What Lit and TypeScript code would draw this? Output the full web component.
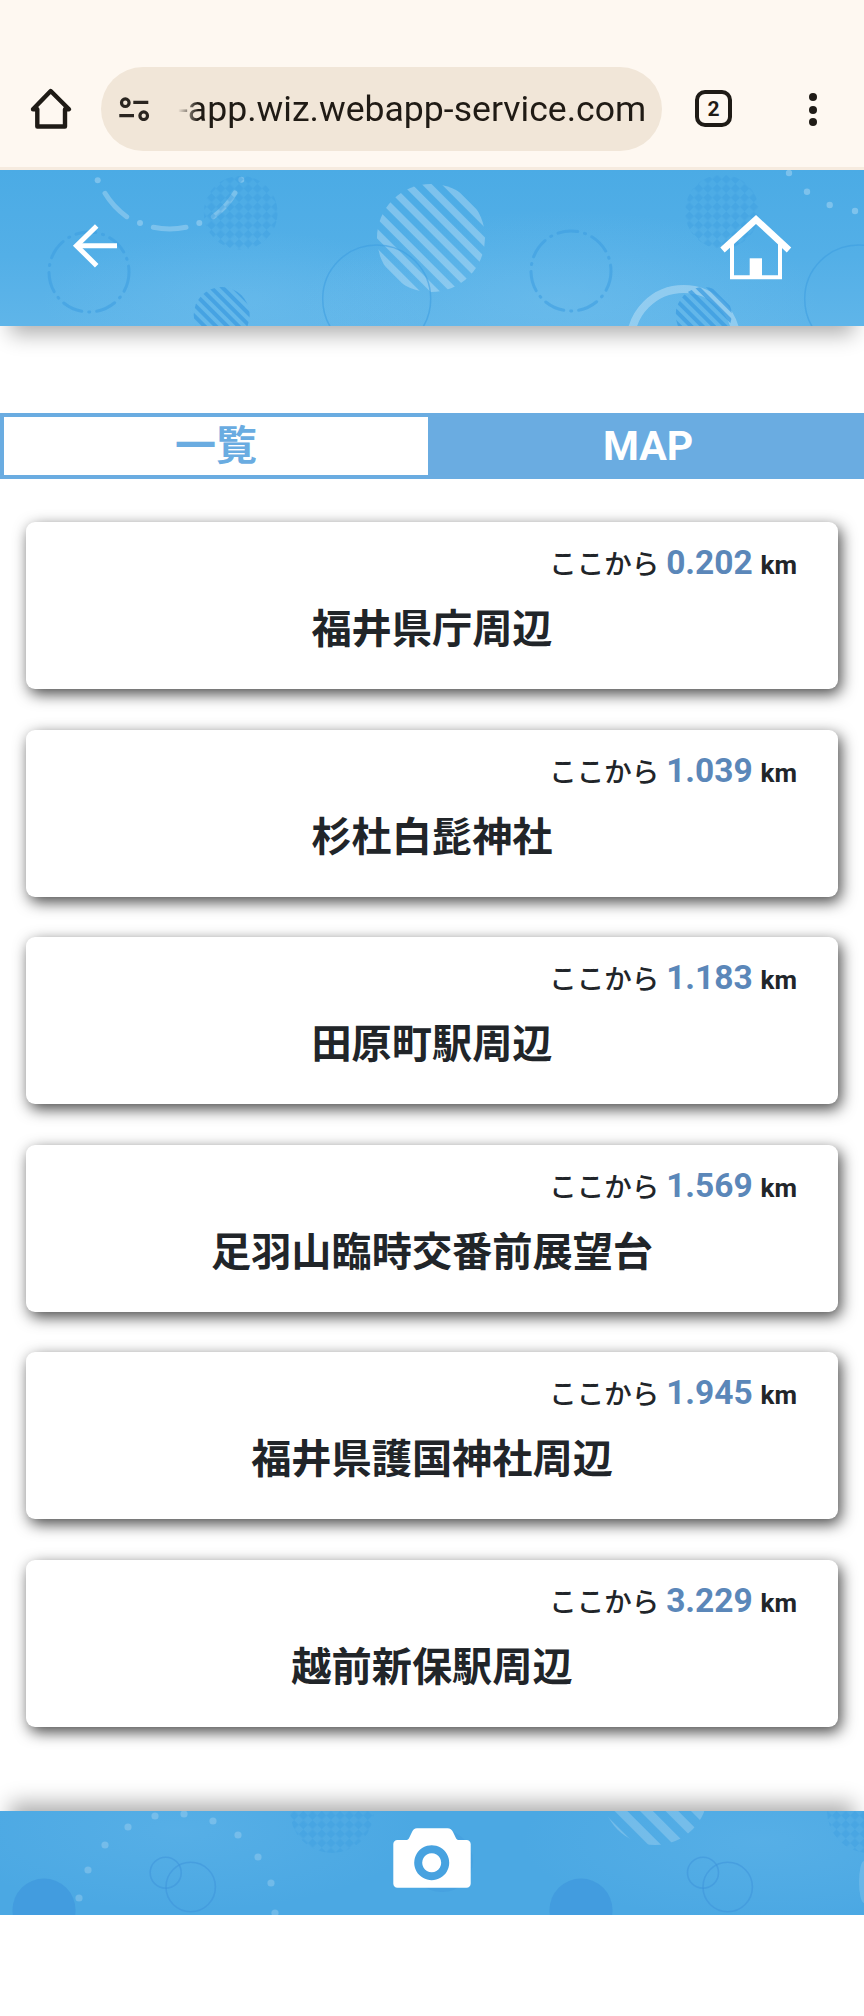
import { LitElement, html, css, svg } from 'lit';
import { customElement } from 'lit/decorators.js';

const SPOTS = [
  { name: '福井県庁周辺', km: '0.202' },
  { name: '杉杜白髭神社', km: '1.039' },
  { name: '田原町駅周辺', km: '1.183' },
  { name: '足羽山臨時交番前展望台', km: '1.569' },
  { name: '福井県護国神社周辺', km: '1.945' },
  { name: '越前新保駅周辺', km: '3.229' },
];

const DOTS_TOP = [[789, 173], [807, 191.7], [829.7, 205], [855, 211]];
const DOTS_BOTTOM = [[79, 1898], [88, 1870], [105, 1845], [128, 1827], [155, 1816], [184, 1814], [213, 1821], [238, 1835], [258, 1857], [271, 1883], [275, 1913]];

const patterns = (prefix: string) => svg`
  <defs>
    <pattern id="${prefix}-light" width="14" height="14" patternUnits="userSpaceOnUse" patternTransform="rotate(-45)">
      <rect width="7" height="14" fill="#fff" fill-opacity=".27"></rect>
    </pattern>
    <pattern id="${prefix}-wide" width="18" height="18" patternUnits="userSpaceOnUse" patternTransform="rotate(-45)">
      <rect width="9" height="18" fill="#fff" fill-opacity=".2"></rect>
    </pattern>
    <pattern id="${prefix}-dark" width="8" height="8" patternUnits="userSpaceOnUse" patternTransform="rotate(-45)">
      <rect width="4" height="8" fill="#3c9ce0" fill-opacity=".75"></rect>
    </pattern>
    <pattern id="${prefix}-check" width="13" height="13" patternUnits="userSpaceOnUse" patternTransform="rotate(45)">
      <rect width="6.5" height="6.5" fill="#3c9ce0" fill-opacity=".42"></rect>
      <rect x="6.5" y="6.5" width="6.5" height="6.5" fill="#3c9ce0" fill-opacity=".42"></rect>
    </pattern>
  </defs>`;

@customElement('app-root')
export class AppRoot extends LitElement {
  static styles = css`
    :host {
      display: block;
      width: 864px;
      min-height: 2016px;
      background: #fff;
      font-family: Roboto, "Noto Sans CJK JP", sans-serif;
      color: #212529;
    }

    .chrome {
      box-sizing: border-box;
      height: 170px;
      padding: 67px 0 0 28px;
      display: flex;
      align-items: flex-start;
      background: #fef8f1;
      border-bottom: 3px solid #f6ebdf;
    }
    .chrome-home {
      width: 46px;
      height: 44px;
      margin-top: 20px;
      margin-right: 27px;
    }
    .pill {
      box-sizing: border-box;
      width: 561px;
      height: 84px;
      padding-left: 16px;
      display: flex;
      align-items: center;
      gap: 27px;
      border-radius: 42px;
      background: #f1e6d8;
    }
    .pill svg {
      width: 34px;
      height: 24px;
      flex: none;
    }
    .url {
      font-size: 35.6px;
      line-height: 84px;
      color: #201b15;
      white-space: nowrap;
      -webkit-mask-image: linear-gradient(to right, transparent, #000 20px);
      mask-image: linear-gradient(to right, transparent, #000 20px);
    }
    .tab-count {
      box-sizing: border-box;
      width: 37px;
      height: 37px;
      margin: 23px 0 0 33px;
      display: flex;
      align-items: center;
      justify-content: center;
      border: 4px solid #1f1b16;
      border-radius: 10px;
      font-size: 21px;
      font-weight: 700;
      color: #1f1b16;
    }
    .menu {
      margin: 26px 0 0 77px;
      display: flex;
      flex-direction: column;
      gap: 4.6px;
    }
    .menu i {
      display: block;
      width: 8px;
      height: 8px;
      border-radius: 50%;
      background: #1f1b16;
    }

    .head {
      position: relative;
      box-sizing: border-box;
      height: 156px;
      padding: 0 68px 0 70px;
      display: flex;
      align-items: center;
      justify-content: space-between;
      background:
        radial-gradient(ellipse 260px 90px at 560px 130px, rgba(130, 200, 240, .3), transparent),
        radial-gradient(ellipse 200px 70px at 240px 130px, rgba(130, 200, 240, .25), transparent),
        linear-gradient(#4babe5, #53afe7 55%, #5fb5e9);
      box-shadow: 0 18px 20px -10px rgba(0, 0, 0, .32);
    }
    .decor {
      position: absolute;
      inset: 0;
      width: 100%;
      height: 100%;
    }
    .head-back, .head-home {
      position: relative;
    }
    .head-back {
      width: 52px;
      height: 48px;
      margin-top: -4px;
    }
    .head-home {
      width: 80px;
      height: 74px;
      margin-top: -2px;
    }

    .tabs {
      margin-top: 87px;
      display: grid;
      grid-template-columns: 1fr 1fr;
      height: 66px;
      font-size: 41px;
      font-weight: 700;
      line-height: 58px;
      text-align: center;
    }
    .tab {
      box-sizing: border-box;
      border: 4px solid #6aace1;
    }
    .tab.on {
      background: #fff;
      color: #6aace1;
    }
    .tab.off {
      background: #6aace1;
      color: #fff;
    }

    .list {
      margin-top: 43px;
      padding: 0 26px 0 26px;
      display: flex;
      flex-direction: column;
      gap: 40.5px;
    }
    .card {
      box-sizing: border-box;
      height: 167px;
      padding: 21px 41px 0 0;
      background: #fff;
      border-radius: 9px;
      box-shadow: 3px 5px 15px rgba(0, 0, 0, .72);
    }
    .dist {
      height: 40px;
      text-align: right;
      line-height: 40px;
      font-size: 27.5px;
      font-weight: 500;
      white-space: nowrap;
    }
    .dist b {
      font-size: 33.5px;
      font-weight: 700;
      color: #5b87b9;
    }
    .dist small {
      margin-left: 1px;
      font-size: 26px;
      font-weight: 700;
    }
    .name {
      margin: 19px -41px 0 0;
      text-align: center;
      font-size: 40.2px;
      font-weight: 700;
      line-height: 56px;
    }

    .foot {
      position: relative;
      margin-top: 84.5px;
      height: 104px;
      display: flex;
      align-items: center;
      justify-content: center;
      background:
        radial-gradient(ellipse 240px 80px at 180px 20px, rgba(120, 195, 240, .25), transparent),
        radial-gradient(ellipse 240px 80px at 760px 30px, rgba(120, 195, 240, .25), transparent),
        #4ba8e3;
      box-shadow: 0 -18px 20px -10px rgba(0, 0, 0, .32);
    }
    .camera {
      position: relative;
      width: 78px;
      height: 60px;
      margin-top: -10px;
    }
  `;

  decorTop() {
    return html`<svg class="decor" viewBox="0 170 864 156" aria-hidden="true">
      ${patterns('t')}
      <g fill="none" stroke="#fff" stroke-opacity=".25" stroke-width="5" stroke-linecap="round">
        <path d="M105 193.3A79 79 0 0 0 126.7 216.7"></path>
        <path d="M153.3 227.3A79 79 0 0 0 186 227.3"></path>
        <path d="M213.3 216.7A79 79 0 0 0 235 193"></path>
      </g>
      <g fill="#fff" fill-opacity=".27">
        <circle cx="97.7" cy="180.3" r="3"></circle>
        <circle cx="140" cy="223" r="3"></circle>
        <circle cx="199.3" cy="223" r="3"></circle>
        <circle cx="241.3" cy="179.7" r="3"></circle>
        ${DOTS_TOP.map(([x, y]) => svg`<circle cx="${x}" cy="${y}" r="3.2"></circle>`)}
      </g>
      <g fill="none" stroke="#3e9ee1" stroke-opacity=".6" stroke-width="3" stroke-linecap="round" stroke-dasharray="20 7 1 7">
        <circle cx="89" cy="272" r="40"></circle>
        <circle cx="571" cy="271" r="40"></circle>
      </g>
      <circle cx="240.7" cy="212.7" r="37" fill="url(#t-check)"></circle>
      <circle cx="722" cy="211.7" r="37" fill="url(#t-check)"></circle>
      <circle cx="431" cy="238" r="54" fill="url(#t-light)"></circle>
      <g fill="none" stroke="#3e9ee1" stroke-opacity=".6" stroke-width="1.5">
        <circle cx="376.7" cy="299" r="54"></circle>
        <circle cx="858.7" cy="299" r="54"></circle>
      </g>
      <circle cx="683.6" cy="342" r="53" fill="none" stroke="#fff" stroke-opacity=".3" stroke-width="8"></circle>
      <circle cx="221.7" cy="315" r="28" fill="url(#t-dark)"></circle>
      <circle cx="703.7" cy="315" r="28" fill="url(#t-dark)"></circle>
    </svg>`;
  }

  decorBottom() {
    return html`<svg class="decor" viewBox="0 1811 864 104" aria-hidden="true">
      ${patterns('b')}
      <g fill="#4098dd" fill-opacity=".8">
        <circle cx="44" cy="1910" r="31.5"></circle>
        <circle cx="581" cy="1910" r="31.5"></circle>
      </g>
      <circle cx="442" cy="1861" r="31" fill="#4098dd" fill-opacity=".4"></circle>
      <g fill="#fff" fill-opacity=".2">
        ${DOTS_BOTTOM.map(([x, y]) => svg`<circle cx="${x}" cy="${y}" r="3.6"></circle>`)}
      </g>
      <g fill="none" stroke="#3e94db" stroke-opacity=".55" stroke-width="1.6">
        <circle cx="165.7" cy="1872.7" r="15.5"></circle>
        <circle cx="190.7" cy="1887" r="24.7"></circle>
        <circle cx="703" cy="1872.7" r="15.5"></circle>
        <circle cx="727.7" cy="1887" r="24.7"></circle>
      </g>
      <circle cx="332" cy="1811" r="42" fill="url(#b-check)"></circle>
      <circle cx="869" cy="1811" r="42" fill="url(#b-check)"></circle>
      <circle cx="655" cy="1792" r="53" fill="url(#b-wide)"></circle>
      <ellipse cx="864" cy="1882" rx="5" ry="21" fill="#fff" fill-opacity=".15"></ellipse>
    </svg>`;
  }

  render() {
    return html`
      <div class="chrome">
        <svg class="chrome-home" viewBox="28 87 46 44" fill="none" stroke="#1f1b16" stroke-width="4.4" stroke-linejoin="round" stroke-linecap="round">
          <path d="M33 109.3L50.7 91 69 109.3H65V126.5H37.3V109.3Z"></path>
        </svg>
        <div class="pill">
          <svg viewBox="117 97 34 24" fill="none" stroke="#2a2520" stroke-width="3.2">
            <circle cx="125.3" cy="102.7" r="3.8"></circle>
            <path d="M133.3 102.4H148.3M119.3 115.7H134"></path>
            <circle cx="143.7" cy="115.7" r="3.8"></circle>
          </svg>
          <span class="url">-app.wiz.webapp-service.com</span>
        </div>
        <div class="tab-count">2</div>
        <div class="menu"><i></i><i></i><i></i></div>
      </div>

      <header class="head">
        ${this.decorTop()}
        <svg class="head-back" viewBox="70 222 52 48" fill="none" stroke="#fff" stroke-width="5">
          <path d="M117 245.7H76"></path>
          <path d="M96.7 226L76.5 245.7 96.7 265.7"></path>
        </svg>
        <svg class="head-home" viewBox="716 210 80 74">
          <path fill="none" stroke="#fff" stroke-width="6.5" d="M722.5 250L756 219.5 789 250"></path>
          <path fill="none" stroke="#fff" stroke-width="4" d="M732 244V277.3H780V244"></path>
          <rect x="749.7" y="258.3" width="12.3" height="19" fill="#fff"></rect>
        </svg>
      </header>

      <nav class="tabs">
        <div class="tab on">一覧</div>
        <div class="tab off">MAP</div>
      </nav>

      <main class="list">
        ${SPOTS.map(s => html`
          <div class="card">
            <div class="dist">ここから <b>${s.km}</b> <small>km</small></div>
            <div class="name">${s.name}</div>
          </div>
        `)}
      </main>

      <footer class="foot">
        ${this.decorBottom()}
        <svg class="camera" viewBox="393 1828 78 60">
          <path fill="#fff" fill-rule="evenodd" d="M417 1828.3H447.5C450 1828.3 452 1830 453 1832L456 1838.2C456.6 1839.4 457.5 1840 459 1840H466.5C469 1840 470.7 1841.7 470.7 1844V1883.5C470.7 1886 469 1887.7 466.5 1887.7H397.5C395 1887.7 393.3 1886 393.3 1883.5V1844C393.3 1841.7 395 1840 397.5 1840H406C407.5 1840 408.4 1839.4 409 1838.2L412 1832C413 1830 414.5 1828.3 417 1828.3ZM431.7 1845.2A17.5 17.5 0 1 0 431.71 1845.2ZM431.7 1853.2A9.5 9.5 0 1 1 431.69 1853.2Z"></path>
        </svg>
      </footer>
    `;
  }
}
